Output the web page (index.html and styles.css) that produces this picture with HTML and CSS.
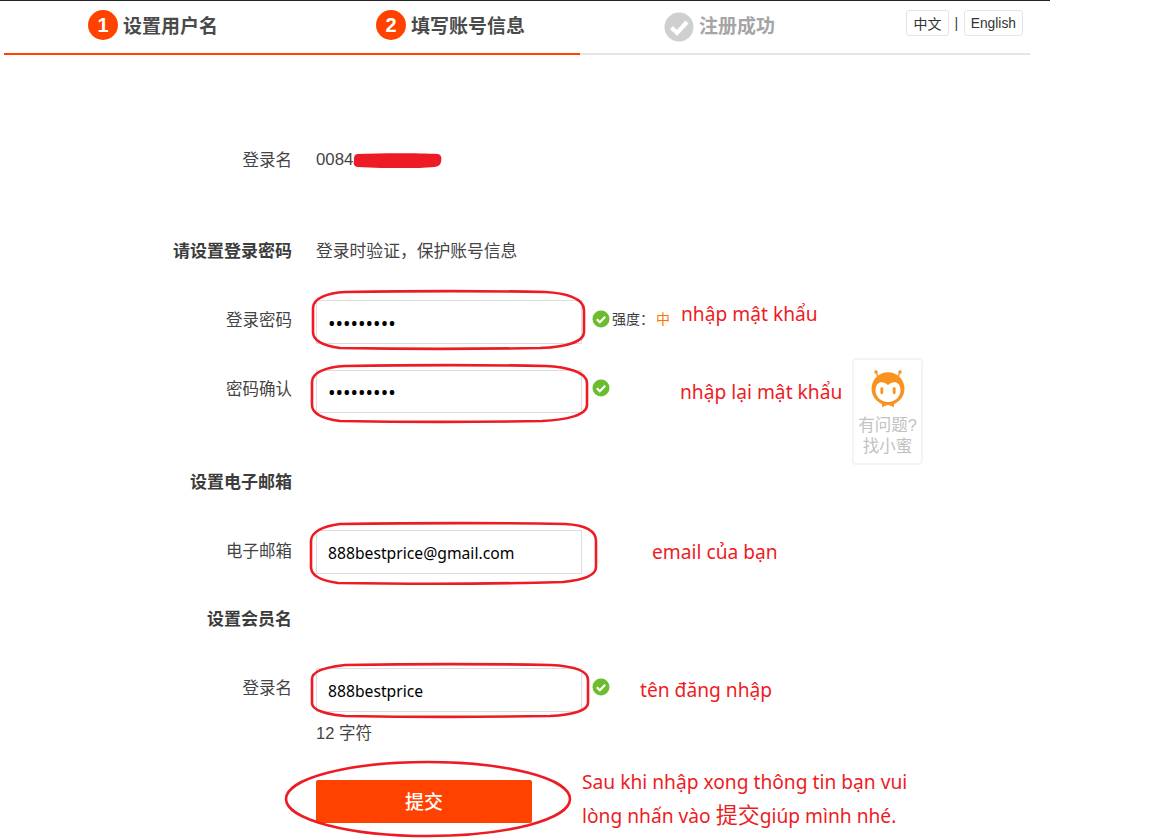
FILE: index.html
```html
<!DOCTYPE html>
<html lang="zh-CN">
<head>
    <meta charset="UTF-8">
    <meta name="viewport" content="width=device-width, initial-scale=1.0">
    <title>设置用户名</title>
    <link rel="stylesheet" href="styles.css">
</head>
<body>
    <div class="page">
        <div class="top-line"></div>

        <header class="steps">
            <div class="step step-done">
                <span class="step-num">1</span>
                <span class="step-text">设置用户名</span>
            </div>
            <div class="step step-done">
                <span class="step-num">2</span>
                <span class="step-text">填写账号信息</span>
            </div>
            <div class="step step-last">
                <svg class="step-check" viewBox="0 0 30 30">
                    <circle cx="15" cy="15" r="14.5" fill="#cfcfcf"/>
                    <path d="M7.5 15.5l5.5 5.5L23 10" fill="none" stroke="#fff" stroke-width="4.2"/>
                </svg>
                <span class="step-text step-text-off">注册成功</span>
                <div class="lang">
                    <a class="lang-btn lang-zh">中文</a>
                    <span class="lang-sep">|</span>
                    <a class="lang-btn lang-en">English</a>
                </div>
            </div>
        </header>

        <form class="form">
            <div class="row row-name">
                <label class="label">登录名</label>
                <span class="value">0084</span>
            </div>

            <div class="row row-pwd-title">
                <label class="label label-bold">请设置登录密码</label>
                <span class="value">登录时验证，保护账号信息</span>
            </div>

            <div class="row row-pwd">
                <label class="label">登录密码</label>
                <input class="field field-pwd" type="password" value="123456789">
                <svg class="ok" viewBox="0 0 18 18">
                    <circle cx="9" cy="9" r="8.5" fill="#6cbd2e"/>
                    <path d="M4.8 9.3l3 3 5.4-5.6" fill="none" stroke="#fff" stroke-width="2.2"/>
                </svg>
                <span class="strength">强度：<em class="strength-mid">中</em></span>
            </div>

            <div class="row row-confirm">
                <label class="label">密码确认</label>
                <input class="field field-pwd field-short" type="password" value="123456789">
                <svg class="ok ok-high" viewBox="0 0 18 18">
                    <circle cx="9" cy="9" r="8.5" fill="#6cbd2e"/>
                    <path d="M4.8 9.3l3 3 5.4-5.6" fill="none" stroke="#fff" stroke-width="2.2"/>
                </svg>
            </div>

            <div class="row row-mail-title">
                <label class="label label-bold">设置电子邮箱</label>
            </div>

            <div class="row row-mail">
                <label class="label">电子邮箱</label>
                <input class="field" type="text" value="888bestprice@gmail.com">
            </div>

            <div class="row row-member-title">
                <label class="label label-bold">设置会员名</label>
            </div>

            <div class="row row-login">
                <label class="label">登录名</label>
                <input class="field" type="text" value="888bestprice">
                <svg class="ok" viewBox="0 0 18 18">
                    <circle cx="9" cy="9" r="8.5" fill="#6cbd2e"/>
                    <path d="M4.8 9.3l3 3 5.4-5.6" fill="none" stroke="#fff" stroke-width="2.2"/>
                </svg>
            </div>

            <div class="count">12 字符</div>

            <button class="submit" type="button">提交</button>
        </form>

        <!-- help widget on the right -->
        <div class="help">
            <svg class="help-face" viewBox="0 0 36 42">
                <circle cx="6" cy="4" r="1.8" fill="#f7931e"/>
                <circle cx="30" cy="4" r="1.8" fill="#f7931e"/>
                <path d="M6 4l2 5M30 4l-2 5" stroke="#f7931e" stroke-width="1.3"/>
                <circle cx="18" cy="20.7" r="16.5" fill="#f7931e"/>
                <path d="M18 17C14 13 6 12 5.5 22 5.5 29 11 34 18 34S30.5 29 30.5 22C30 12 22 13 18 17z" fill="#fff"/>
                <rect x="10.4" y="19.2" width="2.8" height="7" rx="1.4" fill="#f7931e"/>
                <rect x="22.8" y="19.2" width="2.8" height="7" rx="1.4" fill="#f7931e"/>
                <path d="M18 36.5l-6-2.8v5.6zM18 36.5l6-2.8v5.6z" fill="#f7931e"/>
            </svg>
            <span class="help-text">有问题?<br>找小蜜</span>
        </div>

        <!-- red marks drawn on top of the screenshot -->
        <svg class="marks" viewBox="0 0 1152 838">
            <path class="scribble" d="M357 154c25-1 60-1 81 0 3 1 4 3 3 8-1 3-2 4-6 5-12 1-20 1-28 1-18 0-34 0-50-1-3-1-4-3-3-6 0-4 0-6 3-7z"/>
            <g fill="none" stroke="#ed1c24" stroke-width="2.6">
                <path d="M345 292c60-1 150-1 200 0 20 1 39 6 39 18v22c0 10-19 15-44 16-60 1-140 1-200 0-15-2-27-6-27-16v-24c0-10 15-15 32-16z"/>
                <path d="M345 366c60-1 150-1 200 0 22 1 42 6 42 17v22c0 10-20 15-45 16-60 1-142 1-202 0-15-2-28-6-28-16v-23c0-10 15-15 33-16z"/>
                <path d="M340 524c70-1 170-1 225 0 20 1 31 6 31 17v26c0 8-12 13-33 15-70 2-160 2-225 1-15-2-27-7-27-16v-26c0-9 12-15 29-17z"/>
                <path d="M345 665c60-1 150-1 205 0 24 1 38 6 38 15v23c0 7-14 12-38 13-60 1-145 1-205 0-20-2-33-6-33-13v-24c0-8 14-12 33-14z"/>
                <ellipse cx="428" cy="799" rx="142" ry="37"/>
            </g>
        </svg>
        <span class="note note-pwd">nhập mật khẩu</span>
        <span class="note note-confirm">nhập lại mật khẩu</span>
        <span class="note note-mail">email của bạn</span>
        <span class="note note-login">tên đăng nhập</span>
        <p class="note note-submit">Sau khi nhập xong thông tin bạn vui<br>lòng nhấn vào <span class="note-cjk">提交</span>giúp mình nhé.</p>
    </div>
</body>
</html>
```

FILE: styles.css
```css
* {
    box-sizing: border-box;
}
body {
    margin: 0;
    background: #fff;
    color: #3c3c3c;
    font-family: "Liberation Sans", "Noto Sans CJK SC", sans-serif;
}
.page {
    position: relative;
    width: 1152px;
    height: 838px;
    overflow: hidden;
}
.top-line {
    width: 1050px;
    height: 1px;
    background: #222;
}

/* steps */
.steps {
    display: flex;
    width: 1026px;
    height: 54px;
    margin-left: 4px;
}
.step {
    display: flex;
    align-items: center;
    width: 288px;
    height: 54px;
    padding: 0 0 5px 84px;
    border-bottom: 2px solid #ff4200;
}
.step-last {
    flex: 1;
    border-bottom-color: #e5e5e5;
    padding-right: 7px;
}
.step-num {
    width: 30px;
    height: 30px;
    border-radius: 50%;
    background: #ff4200;
    color: #fff;
    font-size: 20px;
    font-weight: bold;
    line-height: 30px;
    text-align: center;
}
.step-check {
    width: 30px;
    height: 30px;
    margin-top: 4px;
}
.step-text {
    margin-left: 5px;
    font-size: 19px;
    font-weight: bold;
    color: #4a4a4a;
}
.step-text-off {
    color: #a5a5a5;
}
.lang {
    display: flex;
    align-items: center;
    margin: -4px 0 0 auto;
    font-size: 14px;
}
.lang-btn {
    height: 26px;
    line-height: 26px;
    border: 1px solid #e4e4e4;
    border-radius: 3px;
    color: #333;
}
.lang-zh {
    padding: 0 6.5px;
}
.lang-en {
    padding: 0 6px;
    font-size: 13.8px;
}
.lang-sep {
    margin: 0 5.5px;
}

/* form */
.form {
    padding-top: 93px;
}
.row {
    display: flex;
    align-items: flex-start;
}
.label {
    width: 292px;
    margin-right: 24px;
    font-size: 16.5px;
    line-height: 38px;
    text-align: right;
    color: #444;
    flex-shrink: 0;
}
.label-bold {
    font-size: 17px;
    font-weight: bold;
    color: #3c3c3c;
    line-height: 24px;
}
.value {
    font-size: 16.8px;
    line-height: 24px;
    color: #444;
}
.row-name .label {
    line-height: 24px;
}
.row-pwd-title {
    margin-top: 68px;
}
.row-pwd {
    margin-top: 36px;
}
.row-pwd .label {
    line-height: 40px;
}
.row-confirm {
    margin-top: 26px;
}
.row-mail-title {
    margin-top: 58px;
}
.row-mail {
    margin-top: 35px;
}
.row-mail .label {
    line-height: 42px;
}
.row-member-title {
    margin-top: 34px;
}
.row-login {
    margin-top: 36px;
}
.row-login .label {
    line-height: 40px;
}
.field {
    width: 266px;
    height: 44px;
    padding: 2px 11px 0;
    border: 1px solid #ddd;
    background: #fff;
    color: #000;
    font-family: "Noto Sans", sans-serif;
    font-size: 15.7px;
}
.field-pwd {
    font-size: 20px;
}
.field-short {
    height: 43px;
}
.ok {
    width: 18px;
    height: 18px;
    margin: 10px 0 0 10px;
}
.ok-high {
    margin-top: 9px;
}
.strength {
    margin: 10px 0 0 2px;
    font-size: 14px;
    line-height: 18px;
}
.strength-mid {
    margin-left: 2px;
    font-style: normal;
    color: #ff7300;
}
.count {
    margin: 9px 0 0 316px;
    font-size: 16.5px;
    line-height: 24px;
    color: #444;
}
.submit {
    display: block;
    width: 216px;
    height: 43px;
    margin: 35px 0 0 316px;
    padding: 0 0 2px;
    border: 0;
    border-radius: 2px;
    background: #ff4200;
    color: #fff;
    font-family: "Noto Sans CJK SC", sans-serif;
    font-size: 19px;
    font-weight: 500;
}

/* help widget */
.help {
    position: absolute;
    left: 852px;
    top: 358px;
    display: flex;
    flex-direction: column;
    align-items: center;
    width: 71px;
    height: 107px;
    padding-top: 8px;
    border: 2px solid #f4f4f4;
    border-radius: 4px;
}
.help-face {
    width: 36px;
    height: 42px;
}
.help-text {
    margin-top: 5px;
    font-size: 16.5px;
    line-height: 21px;
    text-align: center;
    color: #c2c2c2;
}

/* annotations */
.marks {
    position: absolute;
    left: 0;
    top: 0;
    width: 1152px;
    height: 838px;
    pointer-events: none;
}
.scribble {
    fill: #ed1c24;
}
.note {
    position: absolute;
    margin: 0;
    color: #ed1c24;
    font-family: "Noto Sans", "Noto Sans CJK SC", sans-serif;
    font-size: 19.2px;
    line-height: 34px;
    white-space: nowrap;
}
.note-pwd {
    left: 681px;
    top: 297px;
}
.note-confirm {
    left: 680px;
    top: 375px;
}
.note-mail {
    left: 652px;
    top: 535px;
}
.note-login {
    left: 640px;
    top: 673px;
}
.note-submit {
    left: 582px;
    top: 765px;
}
.note-cjk {
    font-family: "Noto Sans CJK SC", sans-serif;
    font-size: 22px;
    line-height: 0;
}
```
